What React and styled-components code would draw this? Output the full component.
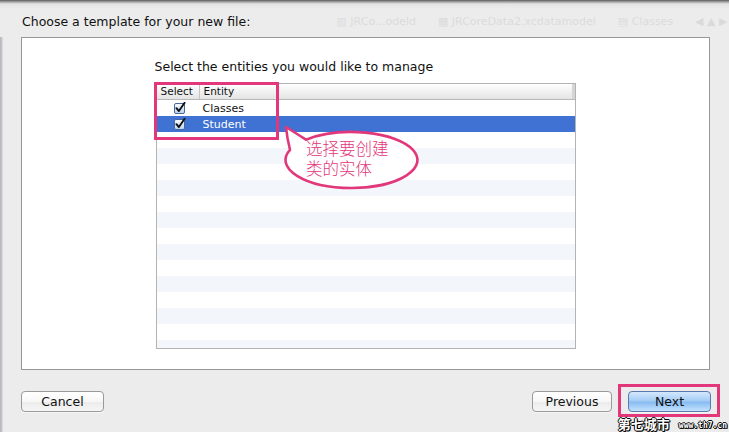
import React from "react";
import styled, { createGlobalStyle, css } from "styled-components";

const PINK = "#e2377a";
const ROW_COUNT = 16;

const entities = [
  { name: "Classes", checked: true },
  { name: "Student", checked: true, selected: true },
];

const GlobalStyle = createGlobalStyle`
  html, body {
    margin: 0;
    padding: 0;
    background: #ececec;
  }
  body {
    font-family: "DejaVu Sans", "Liberation Sans", sans-serif;
    color: #111;
  }
  * {
    box-sizing: border-box;
  }
`;

// checkbox in the aqua look, drawn as a small svg
const CheckBox = ({ checked }) => (
  <svg width="12" height="12" viewBox="0 0 12 12">
    <defs>
      <linearGradient id="cbfill" x1="0" y1="0" x2="0" y2="1">
        <stop offset="0" stopColor="#fbfdff" />
        <stop offset="0.5" stopColor="#dbe8f8" />
        <stop offset="1" stopColor="#b9d2f0" />
      </linearGradient>
    </defs>
    <rect x="0.5" y="1.5" width="10" height="10" rx="1.5" fill="url(#cbfill)" stroke="#4a679b" />
    {checked && (
      <path d="M2.4 6.2 L4.9 9 L10.6 0.8" fill="none" stroke="#111" strokeWidth="1.9" strokeLinecap="round" strokeLinejoin="round" />
    )}
  </svg>
);

const App = () => {
  const rows = Array.from({ length: ROW_COUNT }, (_, i) => entities[i] || null);

  return (
    <>
      <GlobalStyle />
      <Page>
        <TitleBar>
          <Title>Choose a template for your new file:</Title>
          {/* the xcode jump bar showing through the sheet */}
          <GhostToolbar>
            <span>▥ JRCo...odeld</span>
            <span>▦ JRCoreData2.xcdatamodel</span>
            <span>▤ Classes</span>
            <span>◀ ▲ ▶</span>
          </GhostToolbar>
        </TitleBar>

        <Panel>
          <Content>
            <Prompt>Select the entities you would like to manage</Prompt>
            <Table>
              <HeaderRow>
                <SelectHead>Select</SelectHead>
                <EntityHead>Entity</EntityHead>
                <CornerHead />
              </HeaderRow>
              <Body>
                {rows.map((row, i) => (
                  <Row key={i} striped={i % 2 === 1} selected={row && row.selected}>
                    <SelectCell>{row && <CheckBox checked={row.checked} />}</SelectCell>
                    <EntityCell>{row && row.name}</EntityCell>
                  </Row>
                ))}
              </Body>
            </Table>
          </Content>
        </Panel>

        <Footer>
          <Button width={83}>Cancel</Button>
          <Spacer />
          <Button width={80}>Previous</Button>
          <Button width={83} primary>
            Next
          </Button>
        </Footer>

        {/* annotations drawn on top of the screenshot */}
        <Highlight style={{ left: 154, top: 82, width: 125, height: 58 }} />
        <Highlight style={{ left: 618, top: 384, width: 102, height: 33 }} />
        <Callout>
          <svg width="140" height="68" viewBox="0 0 140 68">
            <path
              d="M24 15.7 Q12 8 4 3 Q5 14 8 25.8 A66 28 0 1 0 24 15.7 Z"
              fill="#fff"
              stroke={PINK}
              strokeWidth="2.6"
              strokeLinejoin="round"
            />
          </svg>
          <CalloutText>
            <div>选择要创建</div>
            <div>类的实体</div>
          </CalloutText>
        </Callout>
        <Watermark>
          <b>第七城市</b>
          <small>www.th7.cn</small>
        </Watermark>
      </Page>
    </>
  );
};

const Page = styled.div`
  position: relative;
  width: 729px;
  height: 432px;
  overflow: hidden;
  display: flex;
  flex-direction: column;
  background: linear-gradient(90deg, #b4b6bc 0, #c6c8cc 2px, #ececec 3px, #ececec 100%);
`;

const TitleBar = styled.div`
  position: relative;
  height: 37px;
  display: flex;
  padding: 14px 0 0 22px;
  background: linear-gradient(#5a5a5a 0, #a8a8a8 2px, #e4e4e4 4px, #ececec 9px);
`;

const GhostToolbar = styled.div`
  display: flex;
  gap: 22px;
  margin-left: 86px;
  padding-top: 1px;
  font-size: 11px;
  color: #000;
  opacity: 0.07;
  white-space: nowrap;
`;

const Title = styled.div`
  font-size: 12.5px;
  line-height: 16px;
  color: #111;
`;

const Panel = styled.div`
  width: 689px;
  height: 333px;
  margin-left: 21px;
  border: 1px solid #979797;
  background: #fff;
`;

const Content = styled.div`
  width: 420px;
  margin: 0 auto;
`;

const Prompt = styled.div`
  margin: 21px 0 8px -1px;
  font-size: 12.5px;
  line-height: 16px;
  color: #111;
`;

const Table = styled.div`
  height: 266px;
  border: 1px solid #b3b3b3;
  display: flex;
  flex-direction: column;
  overflow: hidden;
`;

const HeaderRow = styled.div`
  display: flex;
  height: 16px;
  border-bottom: 1px solid #b8b8b8;
  background: linear-gradient(#ffffff, #f1f1f1 50%, #e4e4e4);
  font-size: 10.5px;
  line-height: 15px;
  color: #111;
`;

const SelectHead = styled.div`
  width: 43px;
  padding-left: 4px;
  border-right: 1px solid #c4c4c4;
`;

const EntityHead = styled.div`
  flex: 1;
  padding-left: 4px;
`;

const CornerHead = styled.div`
  width: 3px;
  background: #d6d6d6;
`;

const Body = styled.div`
  flex: 1;
  overflow: hidden;
`;

const Row = styled.div`
  display: flex;
  align-items: center;
  height: 16px;
  font-size: 11px;
  background: ${(p) => (p.striped ? "#f3f6fa" : "#ffffff")};
  color: #111;
  ${(p) =>
    p.selected &&
    css`
      background: #3f72d2;
      color: #fff;
    `}
`;

const SelectCell = styled.div`
  width: 44px;
  display: flex;
  justify-content: center;
  padding-left: 2px;
`;

const EntityCell = styled.div`
  flex: 1;
  padding-left: 2px;
`;

const Footer = styled.div`
  flex: 1;
  display: flex;
  align-items: flex-start;
  gap: 16px;
  padding: 21px 18px 0 21px;
`;

const Spacer = styled.div`
  flex: 1;
`;

const Button = styled.button`
  width: ${(p) => p.width}px;
  height: 21px;
  padding: 0;
  border: 1px solid #9a9a9a;
  border-radius: 4px;
  font-family: "DejaVu Sans", "Liberation Sans", sans-serif;
  font-size: 12.5px;
  color: #111;
  background: linear-gradient(#ffffff, #f7f7f7 50%, #ebebeb 51%, #f6f6f6);
  box-shadow: 0 1px 0 rgba(255, 255, 255, 0.6);
  ${(p) =>
    p.primary &&
    css`
      border-color: #5a79ad;
      background: linear-gradient(#d4e8fd, #a2cbf5 48%, #86bbf1 52%, #c4e2fe);
    `}
`;

const Highlight = styled.div`
  position: absolute;
  border: 3px solid ${PINK};
  pointer-events: none;
`;

const Callout = styled.div`
  position: absolute;
  left: 282px;
  top: 124px;
  width: 140px;
  height: 68px;
  svg {
    position: absolute;
    left: 0;
    top: 0;
  }
`;

const CalloutText = styled.div`
  position: relative;
  padding: 14px 0 0 24px;
  font-family: "Noto Sans CJK SC", sans-serif;
  font-size: 16.5px;
  font-weight: 300;
  line-height: 20px;
  color: ${PINK};
  div {
    height: 20px;
    white-space: nowrap;
  }
`;

const Watermark = styled.div`
  position: absolute;
  right: 2px;
  bottom: 1px;
  display: flex;
  align-items: flex-end;
  gap: 9px;
  color: #fff;
  text-shadow: -1px 0 #000, 1px 0 #000, 0 -1px #000, 0 1px #000, 1px 1px #000;
  b {
    font-family: "Noto Sans CJK SC", sans-serif;
    font-size: 13px;
    line-height: 14px;
  }
  small {
    font-family: "DejaVu Sans Mono", monospace;
    font-size: 8px;
    line-height: 10px;
    font-weight: bold;
  }
`;

export default App;
